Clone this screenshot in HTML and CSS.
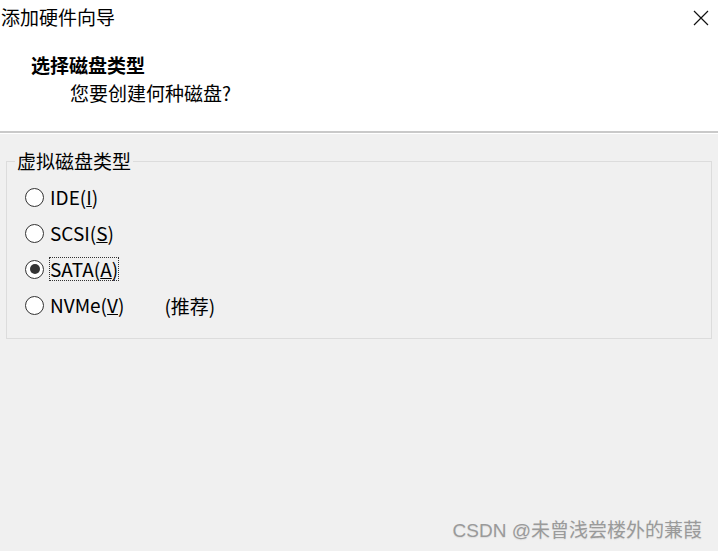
FILE: index.html
```html
<!DOCTYPE html>
<html lang="zh-CN">
<head>
  <meta charset="UTF-8">
  <title>添加硬件向导</title>
  <link rel="stylesheet" href="styles.css">
</head>
<body>
  <div class="header">
    <div class="titlebar">
      <span class="title">添加硬件向导</span>
      <svg class="close" width="16" height="16" viewBox="0 0 16 16">
        <path d="M1 1L15 15M15 1L1 15" stroke="#111" stroke-width="1.2" fill="none"/>
      </svg>
    </div>
    <div class="heading">选择磁盘类型</div>
    <div class="subheading">您要创建何种磁盘?</div>
  </div>

  <fieldset class="group">
    <legend>虚拟磁盘类型</legend>
    <label class="option">
      <span class="radio"></span>
      <span class="text">IDE(<u>I</u>)</span>
    </label>
    <label class="option">
      <span class="radio"></span>
      <span class="text">SCSI(<u>S</u>)</span>
    </label>
    <label class="option">
      <span class="radio checked"></span>
      <span class="text focused">SATA(<u>A</u>)</span>
    </label>
    <label class="option">
      <span class="radio"></span>
      <span class="text">NVMe(<u>V</u>)</span>
      <span class="note">(推荐)</span>
    </label>
  </fieldset>

  <div class="watermark">CSDN @未曾浅尝楼外的蒹葭</div>
</body>
</html>
```

FILE: styles.css
```css
body {
  margin: 0;
  height: 551px;
  background-color: #f0f0f0;
  font-family: "Noto Sans CJK SC", "Noto Sans", sans-serif;
  font-size: 19px;
  color: #000;
  position: relative;
  overflow: hidden;
}

.header {
  background-color: #fff;
  height: 131px;
  border-bottom: 2px solid #c9c9c9;
  box-shadow: 0 1px 0 #fff;
}

.titlebar {
  display: flex;
  justify-content: space-between;
  align-items: center;
  height: 34px;
  padding-left: 1px;
}

.title {
  line-height: 20px;
}

.close {
  margin-right: 9px;
  margin-top: 1px;
}

.heading {
  font-weight: bold;
  line-height: 20px;
  margin-top: 21px;
  padding-left: 31px;
}

.subheading {
  line-height: 20px;
  margin-top: 8px;
  padding-left: 70px;
}

.group {
  margin: 18px 6px 0 6px;
  padding: 8px 0 15px 18px;
  border: 1px solid #dcdcdc;
}

.group legend {
  padding: 0 2px;
  margin-left: -10px;
  line-height: 20px;
}

.option {
  display: flex;
  align-items: center;
  height: 36px;
}

.radio {
  width: 17px;
  height: 17px;
  border: 1px solid #333;
  border-radius: 50%;
  background-color: #fff;
  display: flex;
  justify-content: center;
  align-items: center;
  margin-right: 5px;
}

.radio.checked::after {
  content: "";
  width: 10px;
  height: 10px;
  border-radius: 50%;
  background-color: #333;
}

.text {
  line-height: 22px;
  border: 1px dotted transparent;
}

.text.focused {
  border-color: #333;
}

.note {
  margin-left: 39px;
}

.watermark {
  position: absolute;
  right: 16px;
  bottom: 9px;
  font-family: "Liberation Sans", "Noto Sans CJK SC", sans-serif;
  font-size: 19px;
  color: #9a9a9a;
  text-shadow: 0 1px 1px #ddd;
}
```
